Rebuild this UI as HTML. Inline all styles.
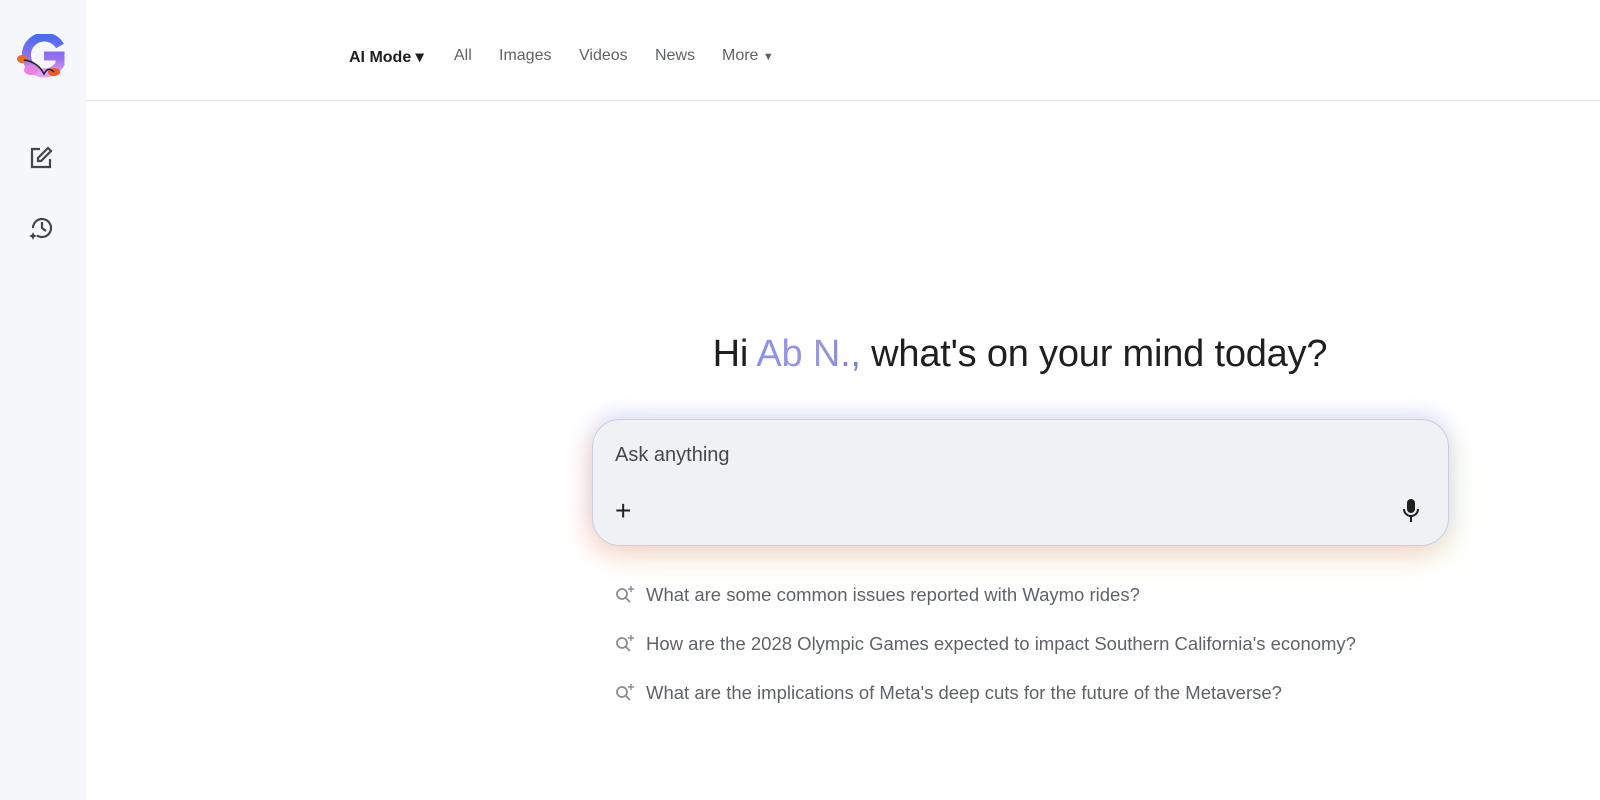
<!DOCTYPE html>
<html><head><meta charset="utf-8"><style>
*{margin:0;padding:0;box-sizing:border-box}
body{width:1600px;height:800px;background:#fff;font-family:"Liberation Sans",Arial,sans-serif;position:relative;overflow:hidden}
.side{position:absolute;left:0;top:0;width:86px;height:800px;background:#f5f7fa}
.hdr{position:absolute;left:86px;top:0;right:0;height:101px;border-bottom:1px solid #e3e3e3}
.nav{position:absolute;top:47px;font-size:16px;color:#5f6368;white-space:nowrap}
.nav span{position:absolute}
h1{position:absolute;left:0;width:2040px;top:333px;text-align:center;font-size:38px;font-weight:500;color:#1f1f1f;letter-spacing:-0.2px}
h1 b{font-weight:500;background:linear-gradient(90deg,#8a8ff0,#9a9ad8 60%,#7b7fc8);-webkit-background-clip:text;color:transparent}
.glow{position:absolute;left:592px;top:419px;width:857px;height:127px;border-radius:28px;box-shadow:-6px 10px 24px rgba(255,150,120,.3),0 -6px 20px rgba(140,170,255,.3),10px 14px 30px rgba(200,230,150,.2)}
.box{position:absolute;left:592px;top:419px;width:857px;height:127px;border-radius:28px;background:#f0f1f5;border:1px solid #c8cde0}
.ph{position:absolute;left:22px;top:24px;font-size:20px;color:#474747}
.sug{position:absolute;left:646px;font-size:18.5px;color:#5f6368}
.si{position:absolute;left:614px}
</style></head><body>
<div class="side">
<svg style="position:absolute;left:16px;top:34px" width="50" height="48" viewBox="0 0 50 48">
<defs><linearGradient id="g" x1="0" y1="0" x2="0" y2="1"><stop offset="0" stop-color="#4a6cf0"/><stop offset=".6" stop-color="#9a70f0"/><stop offset="1" stop-color="#e2a0f0"/></linearGradient></defs>
<path d="M44 12 A18 18 0 1 0 44 30 L44 22 L28 22" fill="none" stroke="url(#g)" stroke-width="9"/>
<ellipse cx="6" cy="25" rx="5" ry="4" fill="#f06a2a"/><ellipse cx="15" cy="36" rx="7" ry="5" fill="#e880e0"/><ellipse cx="38" cy="38" rx="6" ry="4" fill="#f05a20"/>
<path d="M8 26 Q22 28 28 40 Q32 32 38 38" fill="none" stroke="#222" stroke-width="1.5"/>
</svg>
<svg style="position:absolute;left:29px;top:146px" width="24" height="24" viewBox="0 0 24 24" fill="none" stroke="#444746" stroke-width="2.2"><path d="M11 3H3v18h18v-8"/><path d="M19 2l3 3-10 10H9v-3z"/></svg>
<svg style="position:absolute;left:28px;top:214px" width="26" height="26" viewBox="0 0 26 26" fill="none" stroke="#444746" stroke-width="2.2"><path d="M5 14a9 9 0 1 1 4 7.5"/><path d="M14 8v6l4 3"/><path d="M5 19l1 2 2 1-2 1-1 2-1-2-2-1 2-1z" fill="#444746" stroke-width="0.8"/></svg>
</div>
<div class="hdr"></div>
<div class="nav" style="left:0;width:1600px">
<span style="left:349px;color:#1f1f1f;font-weight:bold">AI Mode ▾</span>
<span style="left:454px">All</span><span style="left:499px">Images</span><span style="left:579px">Videos</span><span style="left:655px">News</span><span style="left:722px">More <small style="font-size:11px">▼</small></span>
</div>
<h1>Hi <b>Ab N.,</b> what's on your mind today?</h1>
<div class="glow"></div>
<div class="box">
<div class="ph">Ask anything</div>
<div style="position:absolute;left:22px;top:75px;font-size:28px;color:#1f1f1f;font-weight:300">+</div>
<svg style="position:absolute;left:810px;top:79px" width="16" height="24" viewBox="0 0 16 24"><rect x="4" y="0" width="8" height="14" rx="4" fill="#1f1f1f"/><path d="M1 10a7 7 0 0 0 14 0" fill="none" stroke="#1f1f1f" stroke-width="2"/><path d="M8 17v6" stroke="#1f1f1f" stroke-width="2"/></svg>
</div>
<svg class="si" style="top:584px" width="22" height="20" viewBox="0 0 22 20" fill="none" stroke="#8a8d91" stroke-width="1.8"><circle cx="8" cy="10" r="5"/><path d="M12 14l4 4"/><path d="M17 2v6M14 5h6" stroke-width="1.4"/></svg>
<div class="sug" style="top:584px">What are some common issues reported with Waymo rides?</div>
<svg class="si" style="top:633px" width="22" height="20" viewBox="0 0 22 20" fill="none" stroke="#8a8d91" stroke-width="1.8"><circle cx="8" cy="10" r="5"/><path d="M12 14l4 4"/><path d="M17 2v6M14 5h6" stroke-width="1.4"/></svg>
<div class="sug" style="top:633px">How are the 2028 Olympic Games expected to impact Southern California's economy?</div>
<svg class="si" style="top:682px" width="22" height="20" viewBox="0 0 22 20" fill="none" stroke="#8a8d91" stroke-width="1.8"><circle cx="8" cy="10" r="5"/><path d="M12 14l4 4"/><path d="M17 2v6M14 5h6" stroke-width="1.4"/></svg>
<div class="sug" style="top:682px">What are the implications of Meta's deep cuts for the future of the Metaverse?</div>
</body></html>
